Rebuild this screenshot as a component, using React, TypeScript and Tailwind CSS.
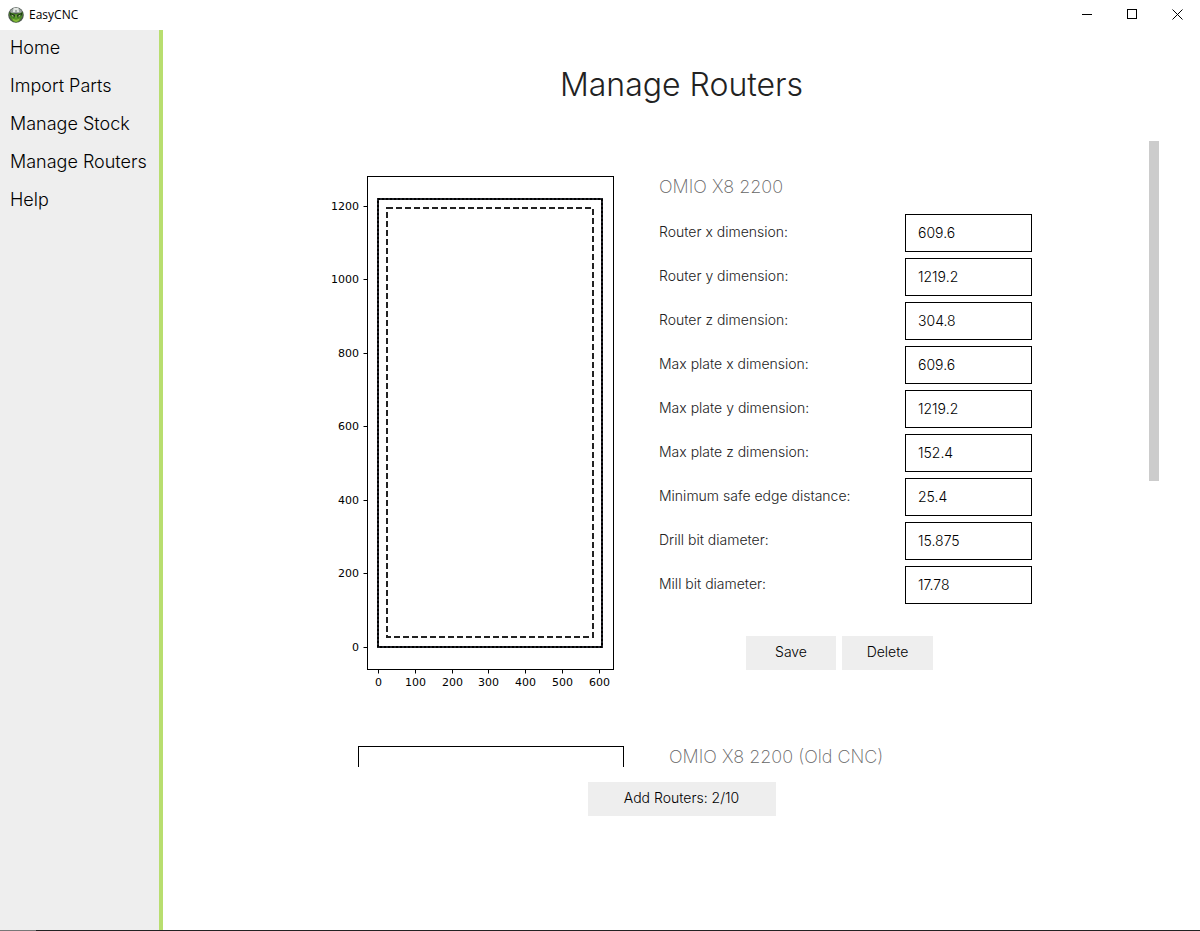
import React from "react";

const navItems = ["Home", "Import Parts", "Manage Stock", "Manage Routers", "Help"];

const fields = [
  { id: "router-x", label: "Router x dimension:", value: "609.6" },
  { id: "router-y", label: "Router y dimension:", value: "1219.2" },
  { id: "router-z", label: "Router z dimension:", value: "304.8" },
  { id: "plate-x", label: "Max plate x dimension:", value: "609.6" },
  { id: "plate-y", label: "Max plate y dimension:", value: "1219.2" },
  { id: "plate-z", label: "Max plate z dimension:", value: "152.4" },
  { id: "safe-edge", label: "Minimum safe edge distance:", value: "25.4" },
  { id: "drill-bit", label: "Drill bit diameter:", value: "15.875" },
  { id: "mill-bit", label: "Mill bit diameter:", value: "17.78" },
];

const xTicks = [
  { at: 47.5, value: 0 },
  { at: 84.5, value: 100 },
  { at: 121.5, value: 200 },
  { at: 157.5, value: 300 },
  { at: 194.5, value: 400 },
  { at: 231.5, value: 500 },
  { at: 268.5, value: 600 },
];

const yTicks = [
  { at: 476.5, value: 0 },
  { at: 402.5, value: 200 },
  { at: 329.5, value: 400 },
  { at: 255.5, value: 600 },
  { at: 182.5, value: 800 },
  { at: 108.5, value: 1000 },
  { at: 35.5, value: 1200 },
];

function AppLogo() {
  return (
    <svg width="16" height="16" viewBox="0 0 16 16" aria-hidden="true">
      <circle cx="8" cy="8" r="7.8" fill="#4d564f" />
      <path d="M2 4A7.4 7.4 0 0 1 14 4L13 6H3z" fill="#9aa39f" />
      <path d="M5.6 1h4.8l.8 4H4.8z" fill="#e2e6e2" />
      <path d="M7.4 3h1.2v2.4H7.4z" fill="#7d8780" />
      <path d="M1 5.6 5 6 8 7.6 11 6l4-.4-.8 4.4L11.6 14 8 15.6 4.4 14 1.8 10z" fill="#4d8a26" />
      <path d="M1.4 5.6 6.6 7.8 8 9l1.4-1.2 5.2-2.2-1 3L10 10.6H6L2.4 8.6z" fill="#1c3a14" />
      <path d="M3 7.4 6.4 9.2 4.4 9.6zM13 7.4 9.6 9.2l2 .4z" fill="#cfe3a6" />
      <path d="M7.2 7.6h1.6l.8 4H6.4z" fill="#5f9c2c" />
      <path d="M4 11.4 8 12.8l4-1.4-1.6 2.6L8 15l-2.4-1z" fill="#86b83a" />
    </svg>
  );
}

function RouterPlot() {
  return (
    <svg
      className="shrink-0 font-normal"
      width="286"
      height="520"
      viewBox="0 0 286 520"
      fontFamily="DejaVu Sans, sans-serif"
      fontSize="11"
      fill="#000"
      role="img"
      aria-labelledby="router-name"
    >
      <rect x="36.5" y="5.5" width="246" height="493" fill="none" stroke="#000" />
      {yTicks.map((t) => (
        <g key={t.value}>
          <path d={`M32.5 ${t.at}H36`} stroke="#000" />
          <text x="28" y={t.at + 3.5} textAnchor="end">{t.value}</text>
        </g>
      ))}
      {xTicks.map((t) => (
        <g key={t.value}>
          <path d={`M${t.at} 499V502.5`} stroke="#000" />
          <text x={t.at} y="515" textAnchor="middle">{t.value}</text>
        </g>
      ))}
      <rect x="47" y="28" width="224" height="448" fill="none" stroke="#22242a" strokeWidth="2" />
      <rect x="47" y="28" width="224" height="448" fill="none" stroke="#000" strokeWidth="2" strokeDasharray="2 2" />
      <rect x="56" y="37" width="206" height="429" fill="none" stroke="#222" strokeWidth="2" strokeDasharray="6 3" />
    </svg>
  );
}

function GreyButton({ children, className }: { children: React.ReactNode; className: string }) {
  return (
    <button type="button" className={`h-[34px] bg-[#eeeeee] pb-[2px] text-center text-sm text-black ${className}`}>
      {children}
    </button>
  );
}

export default function App() {
  return (
    <div className="flex h-screen flex-col bg-white font-['Inter',sans-serif] font-light text-black">
      <header className="flex h-[30px] shrink-0 items-center pl-2 font-['Open_Sans',sans-serif] text-xs font-normal">
        <AppLogo />
        <span className="pl-[5px]">EasyCNC</span>
        <div className="ml-auto flex h-[29px] self-start">
          <button type="button" aria-label="Minimize" className="flex w-[45px] items-center justify-center">
            <svg width="11" height="11" viewBox="0 0 11 11" stroke="#000"><path d="M0 5.5h10" /></svg>
          </button>
          <button type="button" aria-label="Maximize" className="flex w-[45px] items-center justify-center">
            <svg width="11" height="11" viewBox="0 0 11 11" fill="none" stroke="#000"><rect x="0.5" y="0.5" width="9" height="9" /></svg>
          </button>
          <button type="button" aria-label="Close" className="flex w-[45px] items-center justify-center">
            <svg width="11" height="11" viewBox="0 0 11 11" stroke="#000"><path d="M0.5 0.5l10 10M10.5 0.5l-10 10" /></svg>
          </button>
        </div>
      </header>

      <div className="flex min-h-0 flex-1">
        <nav className="flex w-[163px] shrink-0 flex-col border-r-4 border-[#b8de6f] bg-[#eeeeee]">
          {navItems.map((item) => (
            <a key={item} href="#" className="flex h-[38px] items-center whitespace-nowrap pb-[2px] pl-[10px] text-lg">
              {item}
            </a>
          ))}
        </nav>

        <main className="flex min-w-0 flex-1 flex-col items-center pt-[35px] pb-[114px]">
          <h1 className="text-[32px] leading-10 text-[#222222]">Manage Routers</h1>

          <div className="relative mt-9 min-h-0 w-full flex-1 overflow-hidden">
            <section className="flex justify-center gap-[42px] pt-[30px]">
              <RouterPlot />
              <form className="w-[373px] pt-1">
                <h2 id="router-name" className="text-lg leading-6 font-extralight text-[#666666]">OMIO X8 2200</h2>
                <div className="mt-[15px] flex flex-col gap-[6px]">
                  {fields.map((f) => (
                    <div key={f.id} className="flex items-center justify-between text-sm">
                      <label htmlFor={f.id} className="pb-[2px] text-[#222222]">{f.label}</label>
                      <input
                        id={f.id}
                        type="text"
                        defaultValue={f.value}
                        className="h-[38px] w-[127px] border border-black bg-white px-3 pb-[2px] text-black"
                      />
                    </div>
                  ))}
                </div>
                <div className="mt-8 flex justify-center gap-[6px] pr-3">
                  <GreyButton className="w-[90px]">Save</GreyButton>
                  <GreyButton className="w-[91px]">Delete</GreyButton>
                </div>
              </form>
            </section>

            <section className="flex justify-center gap-[42px] pt-[50px]">
              <svg className="shrink-0" width="306" height="520" viewBox="0 0 306 520" aria-hidden="true">
                <rect x="37.5" y="5.5" width="265" height="493" fill="none" stroke="#000" />
              </svg>
              <div className="w-[373px] pt-1">
                <h2 className="text-lg leading-6 font-extralight text-[#666666]">OMIO X8 2200 (Old CNC)</h2>
              </div>
            </section>

            <div className="absolute top-0 right-[41px] h-[340px] w-[10px] bg-[#cccccc]" />
          </div>

          <GreyButton className="mt-[15px] w-[188px] shrink-0">Add Routers: 2/10</GreyButton>
        </main>
      </div>

      <footer className="flex h-px shrink-0 bg-[#222222]">
        <div className="w-9 bg-[#777777]" />
      </footer>
    </div>
  );
}
